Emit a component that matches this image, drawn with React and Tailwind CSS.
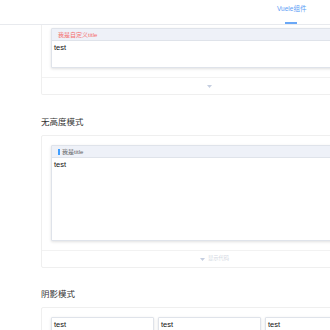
const font = { fontFamily: '"Liberation Sans", "Noto Sans CJK SC", sans-serif' };

function Card({ title, titleClass, bar, bodyClass, children }) {
  return (
    <div className="border border-[#dfe3ea] rounded-[1px] shadow-[0_1px_3px_rgba(0,0,0,0.12)] bg-white">
      {title && (
        <div className="h-[12px] flex items-center px-[6px] bg-[#eef1f8] border-b border-[#dfe3ea]">
          {bar && <span className="w-[2px] h-[6px] bg-[#409eff] mr-[2px]" />}
          <span className={`text-[6px] leading-none ${titleClass}`}>{title}</span>
        </div>
      )}
      <div className={`px-[2px] pt-[2px] text-[7.5px] leading-[10px] text-[#111] ${bodyClass}`}>
        {children}
      </div>
    </div>
  );
}

function Caret() {
  return (
    <svg width="5" height="3" viewBox="0 0 5 3" className="block">
      <path d="M0 0 L5 0 L2.5 3 Z" fill="#c5cee0" />
    </svg>
  );
}

export default function App() {
  return (
    <div className="w-[330px] h-[330px] overflow-hidden bg-white" style={font}>
      <header className="h-[25px] border-b border-[#e8eaee] flex justify-end">
        <div className="w-[53px] flex flex-col items-start">
          <span className="mt-[5px] text-[6.5px] leading-[8px] text-[#5b9df5]">Vuele组件</span>
          <span className="mt-auto ml-[8px] w-[12px] h-[2px] bg-[#6aa8f7]" />
        </div>
      </header>

      <main className="pl-[41px] w-[380px]">
        {/* block 1, top scrolled away */}
        <section className="border-x border-b border-[#efefef] rounded-b-[2px]">
          <div className="pl-[9px] pt-[3px] pb-[9px]">
            <Card title="我是自定义title" titleClass="text-[#f56c6c]" bodyClass="h-[26px]">
              test
            </Card>
          </div>
          <div className="h-[17px] border-t border-[#f2f2f2] flex items-center justify-center pr-[2px]">
            <Caret />
          </div>
        </section>

        <h2 className="mt-[21px] text-[8.5px] leading-[12px] text-[#333]">无高度模式</h2>
        <section className="mt-[7px] border border-[#efefef] rounded-[2px]">
          <div className="pl-[9px] pt-[9px] pb-[9px]">
            <Card title="我是title" titleClass="text-[#606266]" bar bodyClass="h-[82px]">
              test
            </Card>
          </div>
          <div className="h-[17px] border-t border-[#f2f2f2] flex items-center justify-center pl-[8px]">
            <Caret />
            <span className="ml-[3px] text-[5.3px] leading-none text-[#d3d8e2]">显示代码</span>
          </div>
        </section>

        <h2 className="mt-[20px] text-[8.5px] leading-[12px] text-[#333]">阴影模式</h2>
        <section className="mt-[7px] border border-[#efefef] rounded-[2px]">
          <div className="pl-[9px] pt-[9px] pb-[9px] grid grid-cols-[103px_103px_103px] gap-[4px]">
            <Card bodyClass="h-[20px]">test</Card>
            <Card bodyClass="h-[20px]">test</Card>
            <Card bodyClass="h-[20px]">test</Card>
          </div>
        </section>
      </main>
    </div>
  );
}
